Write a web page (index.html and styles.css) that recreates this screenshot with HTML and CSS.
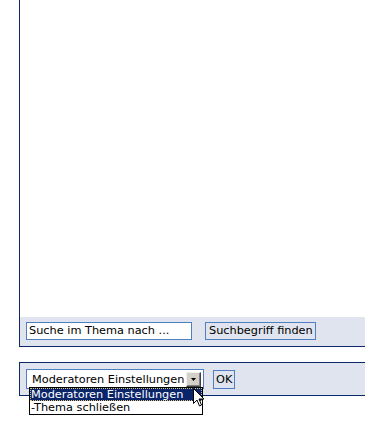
FILE: index.html
```html
<!DOCTYPE html>
<html>
<head>
<meta charset="utf-8">
<link rel="stylesheet" href="styles.css">
</head>
<body>
<div class="panel first">
  <div class="content"></div>
  <div class="bar search-bar">
    <div class="field">Suche im Thema nach ...</div>
    <div class="btn find">Suchbegriff finden</div>
  </div>
</div>
<div class="panel second">
  <div class="bar mod-bar">
    <div class="select-wrap">
      <div class="select">
        <span class="select-text">Moderatoren Einstellungen</span>
        <span class="arrow"><svg width="5" height="3" viewBox="0 0 5 3"><path d="M0 0h5L2.5 3z" fill="#000"/></svg></span>
      </div>
      <div class="list">
        <div class="item selected">Moderatoren Einstellungen</div>
        <div class="item">-Thema schließen</div>
      </div>
      <svg class="cursor" width="12" height="19" viewBox="0 0 12 19"><path d="M0.5 0.5V15.5L4 12L6.5 18L8.5 17L6 11H11z" fill="#fff" stroke="#000" stroke-width="1"/></svg>
    </div>
    <div class="btn ok">OK</div>
  </div>
</div>
</body>
</html>
```
FILE: styles.css
```css
html, body {
  margin: 0;
  padding: 0;
  background: #fff;
  overflow: hidden;
}
body {
  width: 365px;
  height: 433px;
  font-family: "DejaVu Sans", Verdana, sans-serif;
  font-size: 11.3px;
  color: #000;
}
.panel {
  margin-left: 19px;
  border-left: 1px solid #0c2a6a;
  border-bottom: 1px solid #0c2a6a;
}
.content {
  height: 317px;
  background: #fff;
}
.bar {
  background: #dfe4ee;
  display: flex;
  align-items: flex-start;
  padding-left: 6px;
}
.search-bar {
  height: 29px;
  padding-top: 5px;
  box-sizing: border-box;
  gap: 13px;
}
.field {
  width: 166px;
  height: 18px;
  box-sizing: border-box;
  border: 1px solid #4f7fc0;
  background: #fff;
  padding-left: 2px;
  line-height: 16px;
  white-space: nowrap;
}
.btn {
  height: 18px;
  box-sizing: border-box;
  border: 1px solid #4f7fc0;
  background: #dfe4ee;
  padding: 0 2px 0 3px;
  line-height: 16px;
  white-space: nowrap;
}
.second {
  margin-top: 15px;
  border-top: 1px solid #0c2a6a;
}
.mod-bar {
  height: 32px;
  padding-top: 6px;
  box-sizing: border-box;
  gap: 9px;
}
.select-wrap {
  position: relative;
}
.select {
  width: 178px;
  height: 20px;
  box-sizing: border-box;
  border: 1px solid #4f7fc0;
  background: #fff;
  display: flex;
  align-items: center;
  padding-left: 5px;
  padding-right: 2px;
  justify-content: space-between;
  white-space: nowrap;
}
.arrow {
  flex: none;
  width: 15px;
  height: 15px;
  box-sizing: border-box;
  background: #d4d0c8;
  border-top: 1px solid #f0eee8;
  border-left: 1px solid #f0eee8;
  border-right: 1px solid #404040;
  border-bottom: 1px solid #404040;
  box-shadow: inset -1px -1px 0 #808080;
  display: flex;
  align-items: center;
  justify-content: center;
}
.ok {
  height: 19px;
  margin-top: 1px;
  padding: 0 2px;
  line-height: 17px;
}
.list {
  position: absolute;
  left: 3px;
  top: 18px;
  width: 174px;
  box-sizing: border-box;
  border: 1px solid #000;
  background: #fff;
}
.item {
  height: 13px;
  line-height: 13px;
  padding-left: 1px;
  white-space: nowrap;
}
.item.selected {
  background: #0a246a;
  color: #fff;
  outline: 1px dotted #e0c070;
  outline-offset: -1px;
}
.cursor {
  position: absolute;
  left: 167px;
  top: 19px;
}
```
